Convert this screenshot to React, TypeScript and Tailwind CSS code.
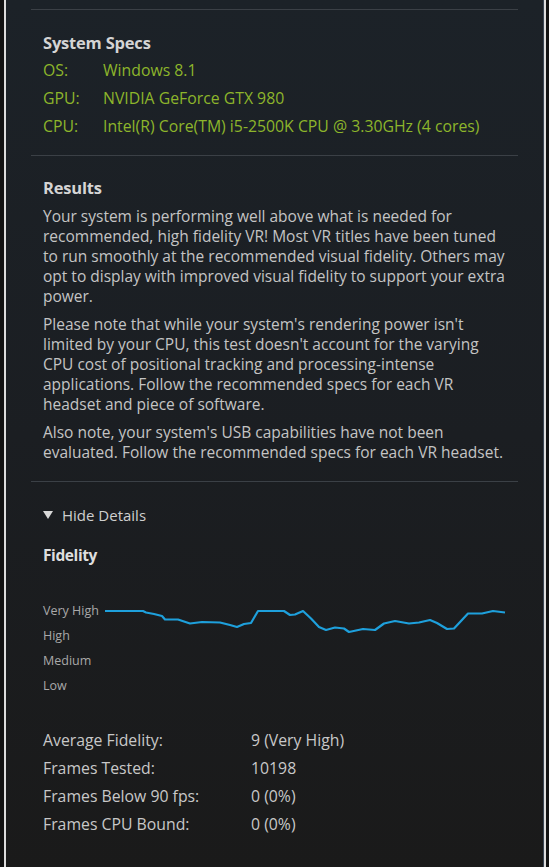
import React from "react";

const specs = [
  { label: "OS:", value: "Windows 8.1" },
  { label: "GPU:", value: "NVIDIA GeForce GTX 980" },
  { label: "CPU:", value: "Intel(R) Core(TM) i5-2500K CPU @ 3.30GHz (4 cores)" },
];

const stats = [
  { label: "Average Fidelity:", value: "9 (Very High)" },
  { label: "Frames Tested:", value: "10198" },
  { label: "Frames Below 90 fps:", value: "0 (0%)" },
  { label: "Frames CPU Bound:", value: "0 (0%)" },
];

// fidelity trace, page coords shifted to the chart box (x-105, y-597)
const trace = [
  [106, 609], [144, 609], [147, 610.5], [155, 612], [163, 614], [166, 617.5], [179, 617.5],
  [191, 621.5], [203, 620], [221, 620.5], [231, 623], [238, 625], [245, 622], [252, 621],
  [259, 609], [285, 609], [291, 613], [296, 612.5], [304, 609], [312, 616.5], [320, 625],
  [327, 628], [336, 625.5], [345, 626.5], [350, 630], [364, 627], [376, 628], [385, 621.5],
  [396, 619], [410, 621.5], [420, 620.5], [431, 618], [438, 621], [448, 627], [455, 626.5],
  [469, 611.5], [483, 611.5], [494, 609], [506, 610.5],
]
  .map(([x, y]) => `${x - 105},${y - 597}`)
  .join(" ");

function Divider() {
  return <div className="mx-[25px] h-px bg-[#3b4046]" />;
}

export default function App() {
  return (
    <div className="flex h-[867px] w-full bg-[#121212] font-['Open_Sans',sans-serif] text-[15.5px] text-[#c4c4c4]">
      <div className="w-[5px]" />
      <div className="w-[2px] bg-[#dcdcdc]" />
      <div className="flex flex-1 flex-col bg-gradient-to-b from-[#1c2228] via-[#1b1e22] to-[#1a1a1a] pt-[9px]">
        <Divider />

        <div className="mt-[23px] px-[37px]">
          <div className="h-[20px] text-[16.5px] font-bold leading-[20px] tracking-[-0.2px] text-[#d4d4d4]">System Specs</div>
          <div className="mt-[4px]">
            {specs.map((s) => (
              <div key={s.label} className="flex h-[28px] items-center text-[15.8px] text-[#8db52b]">
                <span className="w-[60px]">{s.label}</span>
                <span className="whitespace-nowrap">{s.value}</span>
              </div>
            ))}
          </div>
        </div>

        <div className="mt-[14px]">
          <Divider />
        </div>

        <div className="mt-[22px] px-[37px]">
          <div className="h-[20px] text-[16.5px] font-bold leading-[20px] tracking-[-0.2px] text-[#d4d4d4]">Results</div>
          <div className="mt-[8px] flex flex-col gap-[8px] whitespace-nowrap leading-[20px]">
            <p>
              Your system is performing well above what is needed for<br />
              recommended, high fidelity VR! Most VR titles have been tuned<br />
              to run smoothly at the recommended visual fidelity. Others may<br />
              opt to display with improved visual fidelity to support your extra<br />
              power.
            </p>
            <p>
              Please note that while your system's rendering power isn't<br />
              limited by your CPU, this test doesn't account for the varying<br />
              CPU cost of positional tracking and processing-intense<br />
              applications. Follow the recommended specs for each VR<br />
              headset and piece of software.
            </p>
            <p>
              Also note, your system's USB capabilities have not been<br />
              evaluated. Follow the recommended specs for each VR headset.
            </p>
          </div>
        </div>

        <div className="mt-[19px]">
          <Divider />
        </div>

        <div className="mt-[23px] px-[37px]">
          <div className="flex h-[20px] items-center gap-[9px] text-[15px] leading-[20px] text-[#cfcfcf]">
            <svg width="10" height="8" viewBox="0 0 10 8">
              <path d="M0 0 L10 0 L5 8 Z" fill="#d8d8d8" />
            </svg>
            <span>Hide Details</span>
          </div>

          <div className="mt-[20px] h-[20px] text-[15.5px] font-bold leading-[20px] tracking-[-0.4px] text-[#dedede]">Fidelity</div>

          <div className="mt-[33px] flex">
            <div className="flex w-[61px] flex-col text-[12.5px] leading-[25px] text-[#a9a9a9]">
              <span className="whitespace-nowrap">Very High</span>
              <span>High</span>
              <span>Medium</span>
              <span>Low</span>
            </div>
            <svg width="402" height="100" viewBox="0 -1 402 100" className="block">
              <polyline points={trace} fill="none" stroke="#1ea0dc" strokeWidth="2.2" strokeLinejoin="round" />
            </svg>
          </div>

          <div className="mt-[29px]">
            {stats.map((s) => (
              <div key={s.label} className="flex h-[28px] items-center text-[15.8px] text-[#c8c8c8]">
                <span className="w-[208px]">{s.label}</span>
                <span>{s.value}</span>
              </div>
            ))}
          </div>
        </div>
      </div>
      <div className="w-[1px] bg-[#3a4654]" />
      <div className="w-[3px] bg-[#dcdcdc]" />
      <div className="w-[3px]" />
    </div>
  );
}
